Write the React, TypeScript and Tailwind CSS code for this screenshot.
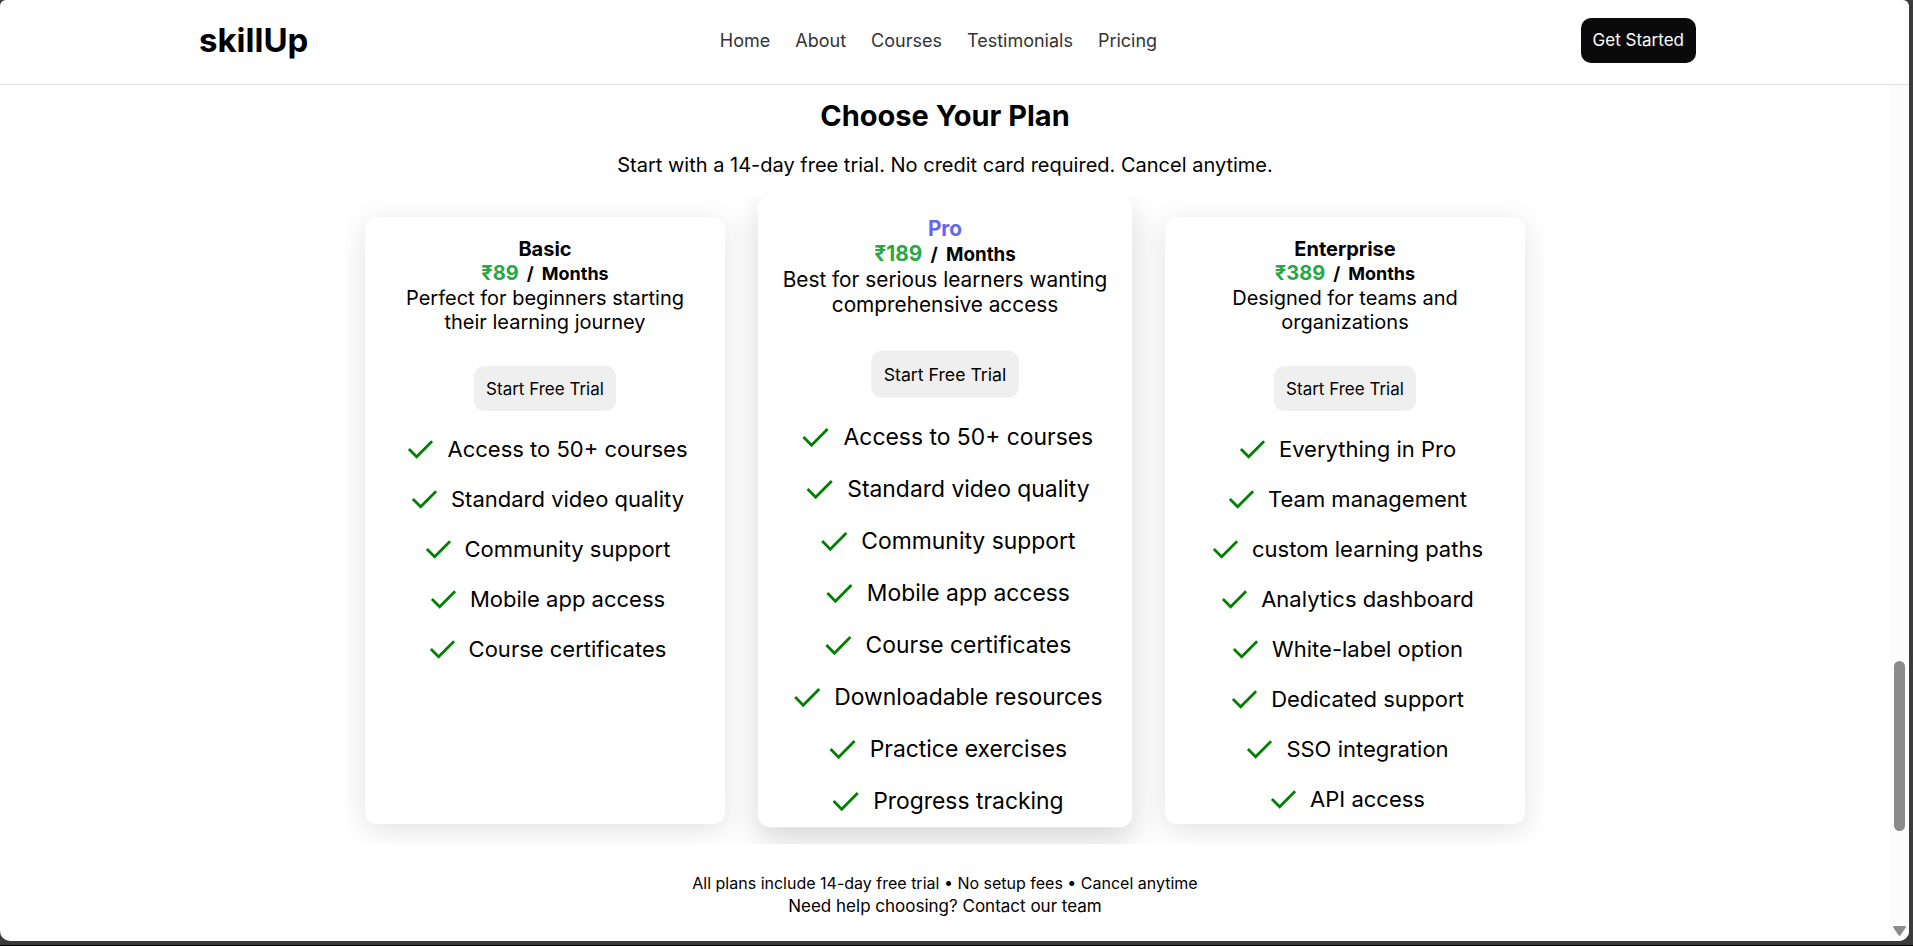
const navLinks = ["Home", "About", "Courses", "Testimonials", "Pricing"];

type Plan = {
  name: string;
  price: string;
  description: string;
  features: string[];
  featured?: boolean;
};

const plans: Plan[] = [
  {
    name: "Basic",
    price: "₹89",
    description: "Perfect for beginners starting their learning journey",
    features: [
      "Access to 50+ courses",
      "Standard video quality",
      "Community support",
      "Mobile app access",
      "Course certificates",
    ],
  },
  {
    name: "Pro",
    price: "₹189",
    description: "Best for serious learners wanting comprehensive access",
    featured: true,
    features: [
      "Access to 50+ courses",
      "Standard video quality",
      "Community support",
      "Mobile app access",
      "Course certificates",
      "Downloadable resources",
      "Practice exercises",
      "Progress tracking",
    ],
  },
  {
    name: "Enterprise",
    price: "₹389",
    description: "Designed for teams and organizations",
    features: [
      "Everything in Pro",
      "Team management",
      "custom learning paths",
      "Analytics dashboard",
      "White-label option",
      "Dedicated support",
      "SSO integration",
      "API access",
    ],
  },
];

function Check() {
  return (
    <svg viewBox="0 -960 960 960" className="size-[37px] shrink-0 fill-[#008000]" aria-hidden="true">
      <path d="M380-243 154-469l50-50 176 176 376-376 50 50-426 426Z" />
    </svg>
  );
}

function PlanCard({ plan }: { plan: Plan }) {
  return (
    <article
      className={
        "flex w-[360px] flex-col items-center rounded-xl bg-white px-5 pt-5 text-center " +
        (plan.featured
          ? "z-10 -translate-y-[9px] scale-[1.04] shadow-[0_12px_30px_rgba(0,0,0,0.16)]"
          : "shadow-[0_6px_30px_rgba(0,0,0,0.12)]")
      }
    >
      <h3 className={"text-xl leading-6 font-bold " + (plan.featured ? "text-[#6366f1]" : "text-black")}>
        {plan.name}
      </h3>
      <p className="flex items-baseline gap-2 text-lg leading-6 font-bold">
        <span className="text-xl leading-6 text-[#28a745]">{plan.price}</span>
        <span>/</span>
        <span>Months</span>
      </p>
      <p className="text-xl leading-6">{plan.description}</p>
      <button type="button" className="mt-8 rounded-[10px] bg-[#efefef] px-3 pt-3 pb-[10px] text-[17px] leading-[23px]">
        Start Free Trial
      </button>
      <ul className="mt-[13px] w-full">
        {plan.features.map((feature) => (
          <li key={feature} className="flex h-[50px] items-center justify-center gap-2 text-[22px]">
            <Check />
            <span>{feature}</span>
          </li>
        ))}
      </ul>
    </article>
  );
}

function Scrollbar() {
  return (
    <div className="flex w-[19px] flex-col items-center bg-[#fcfcfc] pb-[5px]" aria-hidden="true">
      <div className="grow-[576]" />
      <div className="w-[11px] grow-[170] rounded-full bg-[#8b8b8b]" />
      <div className="grow-[95]" />
      <svg viewBox="0 0 13 10" className="h-[10px] w-[13px] fill-[#8b8b8b]">
        <path d="M1.2 0h10.6q1.6.3.8 1.8L7.5 9.2q-1 1.3-2 0L.4 1.8Q-.4.3 1.2 0Z" />
      </svg>
    </div>
  );
}

export default function App() {
  return (
    <div className="flex min-h-screen border-b border-black bg-[#3b3b3b] pr-1 pb-1 font-['Inter',sans-serif] text-black">
      <div className="flex grow flex-col overflow-hidden rounded-t-[6px] rounded-b-[10px] bg-white">
        <header className="flex h-[85px] items-center justify-between border-b border-[#e2e2e2] pr-[213px] pb-[3px] pl-[199px]">
          <a href="#home" className="text-[33px] leading-none font-bold">
            skillUp
          </a>
          <nav className="flex gap-[25px] pr-3 text-lg text-[#333333]">
            {navLinks.map((link) => (
              <a key={link} href={"#" + link.toLowerCase()}>
                {link}
              </a>
            ))}
          </nav>
          <button type="button" className="rounded-[10px] bg-[#0a0a0a] px-3 py-[11px] text-[17px] leading-[23px] text-white">
            Get Started
          </button>
        </header>

        <div className="flex grow">
          <main className="flex grow flex-col items-center pt-[13px]">
            <h2 className="text-[29px] leading-9 font-bold">Choose Your Plan</h2>
            <p className="mt-[19px] text-xl leading-6">
              Start with a 14-day free trial. No credit card required. Cancel anytime.
            </p>
            <section className="mt-5 flex justify-center gap-10 overflow-hidden p-5">
              {plans.map((plan) => (
                <PlanCard key={plan.name} plan={plan} />
              ))}
            </section>
            <div className="mt-7 text-center">
              <p className="text-base leading-[23px]">All plans include 14-day free trial • No setup fees • Cancel anytime</p>
              <p className="text-[17px] leading-[23px]">Need help choosing? Contact our team</p>
            </div>
          </main>
          <Scrollbar />
        </div>
      </div>
    </div>
  );
}
